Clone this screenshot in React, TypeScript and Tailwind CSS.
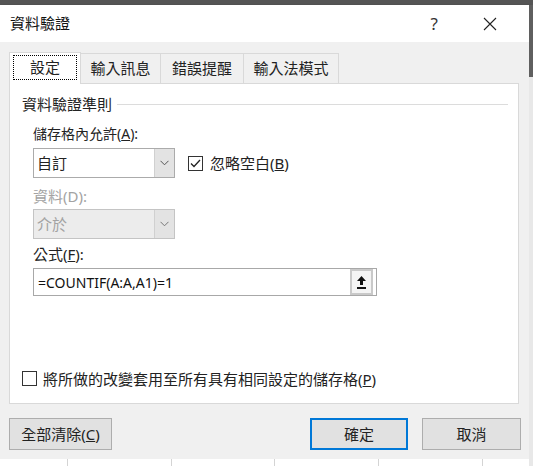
import React from "react";

const font = "font-['Noto_Sans','Noto_Sans_CJK_TC',sans-serif]";

function Chevron({ muted }: { muted?: boolean }) {
  return (
    <svg width="9" height="6" viewBox="0 0 9 6" fill="none">
      <path d="M0.5 0.8 L4.5 4.8 L8.5 0.8" stroke={muted ? "#777" : "#555"} strokeWidth="1" />
    </svg>
  );
}

function Combo({ value, disabled }: { value: string; disabled?: boolean }) {
  return (
    <div
      className={`flex w-[142px] h-[30px] border ${
        disabled ? "border-[#c4c4c4] bg-[#ececec] text-[#a3a3a3]" : "border-[#ababab] bg-white text-[#222]"
      }`}
    >
      <div className="flex-1 flex items-center pl-[3px] text-[15px]">{value}</div>
      <div className="w-[20px] flex items-center justify-center bg-[#e3e3e3] border-l border-[#d0d0d0]">
        <Chevron muted={disabled} />
      </div>
    </div>
  );
}

function Tab({ label, active, width }: { label: string; active?: boolean; width: string }) {
  if (active) {
    return (
      <div className={`${width} h-[32px] bg-white border border-b-0 border-[#d9d9d9] relative z-10 -mb-px flex items-center justify-center px-[3px] pb-[2px]`}>
        <div className="w-full h-[25px] border border-dotted border-black flex items-center justify-center text-[15px] text-[#222]">
          {label}
        </div>
      </div>
    );
  }
  return (
    <div className={`${width} h-[30px] border-t border-r border-[#d9d9d9] flex items-center justify-center text-[15px] text-[#222]`}>
      {label}
    </div>
  );
}

function CheckBox({ checked }: { checked?: boolean }) {
  return (
    <div className="w-[15px] h-[15px] border border-[#333] bg-white flex items-center justify-center">
      {checked && (
        <svg width="11" height="9" viewBox="0 0 11 9" fill="none">
          <path d="M1 4.5 L4 7.5 L10 1" stroke="#222" strokeWidth="1.3" />
        </svg>
      )}
    </div>
  );
}

function Button({ label, primary, width }: { label: React.ReactNode; primary?: boolean; width: string }) {
  return (
    <div
      className={`${width} h-[32px] flex items-center justify-center bg-[#e1e1e1] text-[15px] text-[#222] ${
        primary ? "border-2 border-[#0078d7]" : "border border-[#adadad]"
      }`}
    >
      {label}
    </div>
  );
}

export default function App() {
  return (
    <div className={`w-[533px] h-[466px] overflow-hidden flex flex-col bg-white ${font}`}>
      {/* window behind, top edge */}
      <div className="h-[5px] bg-[#555555]" />

      <div className="flex flex-1">
        <div className="w-[529px] flex flex-col">
          {/* Dialog */}
          <div className="h-[454px] flex flex-col bg-[#f0f0f0] shadow-[1px_1px_3px_rgba(0,0,0,0.25)]">
            {/* Title bar */}
            <div className="h-[37px] bg-white flex items-center pl-[10px] pr-[32px]">
              <span className="text-[15px] text-[#111]">資料驗證</span>
              <span className="ml-auto text-[17px] text-[#333] mr-[45px]">?</span>
              <svg width="14" height="14" viewBox="0 0 14 14" fill="none">
                <path d="M1 1 L13 13 M13 1 L1 13" stroke="#222" strokeWidth="1.1" />
              </svg>
            </div>

            {/* Tabs */}
            <div className="flex items-end pl-[9px] pt-[10px]">
              <Tab label="設定" active width="w-[72px]" />
              <Tab label="輸入訊息" width="w-[80px]" />
              <Tab label="錯誤提醒" width="w-[83px]" />
              <Tab label="輸入法模式" width="w-[95px]" />
            </div>

            {/* Panel */}
            <div className="ml-[9px] mr-[10px] h-[321px] bg-white border border-[#d9d9d9] flex flex-col text-[15px] text-[#222]">
              <div className="mt-[10px] ml-[12px] mr-[10px] h-[20px] flex items-center">
                <span className="leading-[20px]">資料驗證準則</span>
                <div className="flex-1 h-px bg-[#dcdcdc] ml-[5px]" />
              </div>

              <div className="mt-[10px] ml-[23px] h-[20px] leading-[20px] text-[14px]">
                儲存格內允許(<span className="underline">A</span>):
              </div>

              <div className="mt-[4px] ml-[23px] flex items-center">
                <Combo value="自訂" />
                <div className="ml-[13px] flex items-center">
                  <CheckBox checked />
                  <span className="ml-[7px]">
                    忽略空白(<span className="underline">B</span>)
                  </span>
                </div>
              </div>

              <div className="mt-[8px] ml-[23px] h-[20px] leading-[20px] text-[#a3a3a3]">資料(D):</div>

              <div className="mt-[3px] ml-[23px]">
                <Combo value="介於" disabled />
              </div>

              <div className="mt-[5px] ml-[23px] h-[20px] leading-[20px]">
                公式(<span className="underline">F</span>):
              </div>

              <div className="mt-[4px] ml-[23px] w-[344px] h-[28px] border border-[#a8a8a8] flex items-center pl-[4px] pr-[3px]">
                <span className="text-[14px] text-[#111] flex-1">=COUNTIF(A:A,A1)=1</span>
                <div className="w-[23px] h-[26px] border-2 border-[#c9c9c9] bg-[#f4f4f4] flex items-center justify-center">
                  <svg width="9" height="13" viewBox="0 0 9 13">
                    <path d="M4.5 0 L9 5 L6 5 L6 9 L3 9 L3 5 L0 5 Z" fill="#111" />
                    <rect x="0" y="11" width="9" height="2" fill="#111" />
                  </svg>
                </div>
              </div>

              <div className="mt-auto mb-[13px] ml-[12px] flex items-center">
                <CheckBox />
                <span className="ml-[6px]">
                  將所做的改變套用至所有具有相同設定的儲存格(<span className="underline">P</span>)
                </span>
              </div>
            </div>

            {/* Buttons */}
            <div className="flex items-center mt-[14px] pl-[9px] pr-[8px]">
              <Button
                width="w-[103px]"
                label={
                  <>
                    全部清除(<span className="underline">C</span>)
                  </>
                }
              />
              <div className="flex-1" />
              <Button width="w-[98px]" label="確定" primary />
              <div className="w-[14px]" />
              <Button width="w-[99px]" label="取消" />
            </div>
          </div>

          {/* sheet cells peeking below */}
          <div className="flex-1 flex bg-white">
            <div className="w-[68px] border-r border-[#d4d4d4]" />
            <div className="w-[104px] border-r border-[#d4d4d4]" />
            <div className="w-[103px] border-r border-[#d4d4d4]" />
            <div className="w-[104px] border-r border-[#d4d4d4]" />
            <div className="w-[104px] border-r border-[#d4d4d4]" />
          </div>
        </div>

        {/* scrollbar of the sheet behind */}
        <div className="flex-1 flex flex-col bg-[#e8e8e8]">
          <div className="h-[72px] bg-[#5f5f5f]" />
        </div>
      </div>
    </div>
  );
}
